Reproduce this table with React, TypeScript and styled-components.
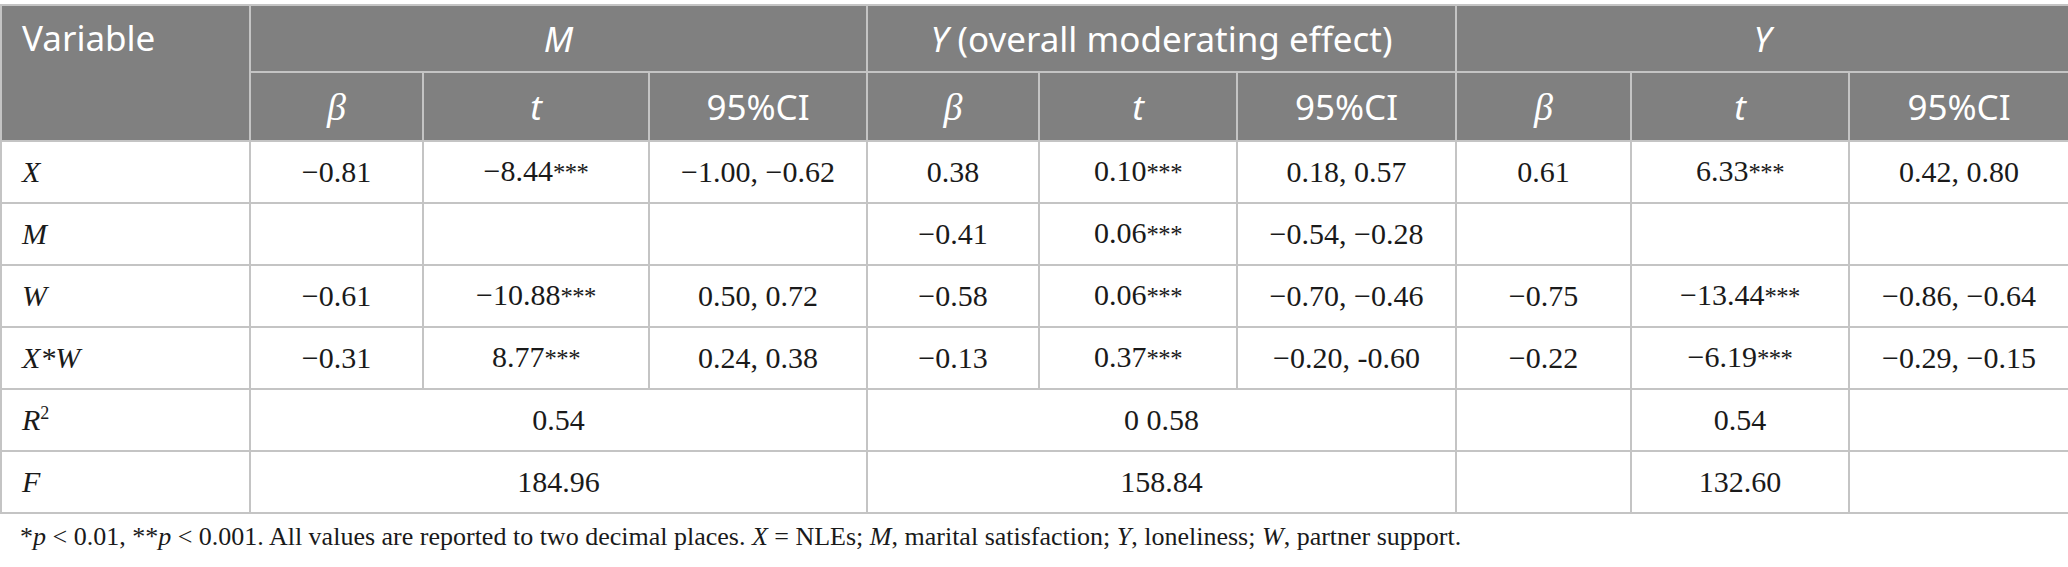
import React from "react";
import styled, { createGlobalStyle } from "styled-components";

const GlobalStyle = createGlobalStyle`
  html, body {
    margin: 0;
    padding: 0;
    background: #ffffff;
  }
`;

const Page = styled.div`
  width: 2068px;
  padding-top: 4px;
`;

const Table = styled.table`
  width: 2068px;
  border-collapse: collapse;
  table-layout: fixed;
`;

const HeadRow = styled.tr<{ $h: number }>`
  height: ${(p) => p.$h}px;
`;

const BodyRow = styled.tr`
  height: 62px;
`;

const HeadCell = styled.th<{ $left?: boolean; $top?: boolean }>`
  background: #808080;
  color: #ffffff;
  font-family: "Noto Sans", "Open Sans", sans-serif;
  font-weight: 400;
  font-size: 35px;
  line-height: 40px;
  text-align: ${(p) => (p.$left ? "left" : "center")};
  vertical-align: ${(p) => (p.$top ? "top" : "middle")};
  padding: ${(p) => (p.$top ? "12px 20px 0" : "0 20px")};
  border: 2px solid #c4c4c4;
`;

const Cell = styled.td<{ $left?: boolean }>`
  font-family: "Liberation Serif", "Times New Roman", serif;
  font-size: 30px;
  line-height: 34px;
  color: #1a1a1a;
  text-align: ${(p) => (p.$left ? "left" : "center")};
  vertical-align: middle;
  padding: 0 20px;
  border: 2px solid #c4c4c4;
  white-space: nowrap;
`;

const SerifItalic = styled.i`
  font-family: "Liberation Serif", "Times New Roman", serif;
  font-style: italic;
`;

const Beta = styled.i`
  font-family: "Liberation Serif", "Times New Roman", serif;
  font-style: italic;
  font-size: 38px;
`;

const SansItalic = styled.i`
  font-family: "Noto Sans", "Open Sans", sans-serif;
  font-style: italic;
`;

const Stars = styled.span`
  font-size: 0.82em;
  letter-spacing: -0.02em;
`;

const Sup = styled.sup`
  font-size: 0.6em;
  font-style: normal;
  vertical-align: 0.6em;
  line-height: 0;
`;

const Footnote = styled.p`
  margin: 8px 0 0;
  padding-left: 20px;
  font-family: "Liberation Serif", "Times New Roman", serif;
  font-size: 26px;
  line-height: 30px;
  color: #1a1a1a;
  white-space: nowrap;
`;

const colWidths = [249, 173, 226, 218, 172, 198, 219, 175, 218, 220];

type Row = { label: React.ReactNode; cells: string[] };

const rows: Row[] = [
  {
    label: <SerifItalic>X</SerifItalic>,
    cells: ["−0.81", "−8.44***", "−1.00, −0.62", "0.38", "0.10***", "0.18, 0.57", "0.61", "6.33***", "0.42, 0.80"],
  },
  {
    label: <SerifItalic>M</SerifItalic>,
    cells: ["", "", "", "−0.41", "0.06***", "−0.54, −0.28", "", "", ""],
  },
  {
    label: <SerifItalic>W</SerifItalic>,
    cells: ["−0.61", "−10.88***", "0.50, 0.72", "−0.58", "0.06***", "−0.70, −0.46", "−0.75", "−13.44***", "−0.86, −0.64"],
  },
  {
    label: <SerifItalic>X*W</SerifItalic>,
    cells: ["−0.31", "8.77***", "0.24, 0.38", "−0.13", "0.37***", "−0.20, -0.60", "−0.22", "−6.19***", "−0.29, −0.15"],
  },
];

const renderValue = (v: string) => {
  const idx = v.indexOf("***");
  if (idx < 0) return v;
  return (
    <>
      {v.slice(0, idx)}
      <Stars>***</Stars>
    </>
  );
};

const SubHeads = () => (
  <>
    <HeadCell>
      <Beta>β</Beta>
    </HeadCell>
    <HeadCell>
      <SansItalic>t</SansItalic>
    </HeadCell>
    <HeadCell>95%CI</HeadCell>
  </>
);

export default function App() {
  return (
    <>
      <GlobalStyle />
      <Page>
        <Table>
          <colgroup>
            {colWidths.map((w, i) => (
              <col key={i} style={{ width: w }} />
            ))}
          </colgroup>
          <thead>
            <HeadRow $h={67}>
              <HeadCell rowSpan={2} $left $top>
                Variable
              </HeadCell>
              <HeadCell colSpan={3}>
                <SansItalic>M</SansItalic>
              </HeadCell>
              <HeadCell colSpan={3}>
                <SansItalic>Y</SansItalic> (overall moderating effect)
              </HeadCell>
              <HeadCell colSpan={3}>
                <SansItalic>Y</SansItalic>
              </HeadCell>
            </HeadRow>
            <HeadRow $h={69}>
              <SubHeads />
              <SubHeads />
              <SubHeads />
            </HeadRow>
          </thead>
          <tbody>
            {rows.map((r, i) => (
              <BodyRow key={i}>
                <Cell $left>{r.label}</Cell>
                {r.cells.map((c, j) => (
                  <Cell key={j}>{renderValue(c)}</Cell>
                ))}
              </BodyRow>
            ))}
            <BodyRow>
              <Cell $left>
                <SerifItalic>R</SerifItalic>
                <Sup>2</Sup>
              </Cell>
              <Cell colSpan={3}>0.54</Cell>
              <Cell colSpan={3}>0 0.58</Cell>
              <Cell></Cell>
              <Cell>0.54</Cell>
              <Cell></Cell>
            </BodyRow>
            <BodyRow>
              <Cell $left>
                <SerifItalic>F</SerifItalic>
              </Cell>
              <Cell colSpan={3}>184.96</Cell>
              <Cell colSpan={3}>158.84</Cell>
              <Cell></Cell>
              <Cell>132.60</Cell>
              <Cell></Cell>
            </BodyRow>
          </tbody>
        </Table>
        <Footnote>
          *<SerifItalic>p</SerifItalic> &lt; 0.01, **<SerifItalic>p</SerifItalic> &lt; 0.001. All values are reported
          to two decimal places. <SerifItalic>X</SerifItalic> = NLEs; <SerifItalic>M</SerifItalic>, marital
          satisfaction; <SerifItalic>Y</SerifItalic>, loneliness; <SerifItalic>W</SerifItalic>, partner support.
        </Footnote>
      </Page>
    </>
  );
}
